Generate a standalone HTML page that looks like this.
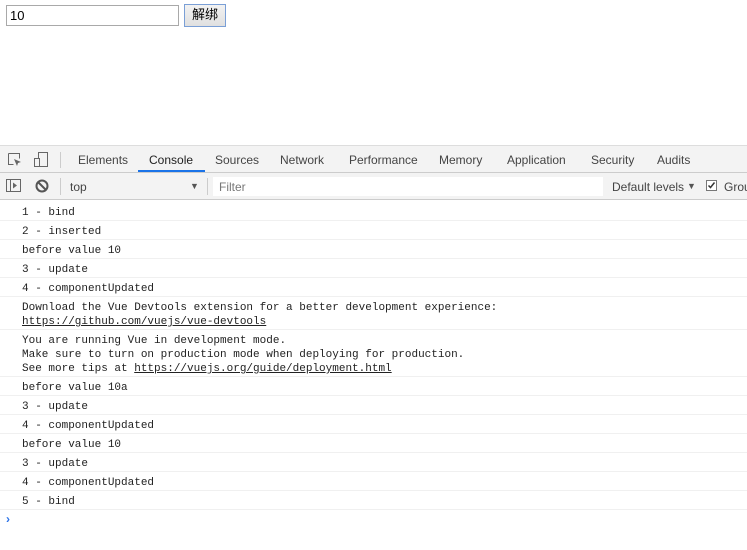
<!DOCTYPE html>
<html><head><meta charset="utf-8"><style>
*{box-sizing:border-box;margin:0;padding:0}
body{width:747px;height:550px;overflow:hidden;background:#fff;font-family:"Liberation Sans","Noto Sans CJK SC",sans-serif;position:relative}
.inp{position:absolute;left:6px;top:5px;width:173px;height:21px;border:1px solid #a9a9a9;font-size:13px;padding:2px 3px;line-height:15px}
.btn{position:absolute;left:184px;top:4px;width:42px;height:23px;border:1px solid #7a9fd6;background:linear-gradient(#f2f2f2,#e0e0e0);font-size:13px;text-align:center;line-height:20px}
.tabs{position:absolute;left:0;top:145px;width:747px;height:28px;background:#f3f3f3;border-top:1px solid #ddd;border-bottom:1px solid #ccc;font-size:12px;color:#444}
.tabs span{position:absolute;top:7px}
.ul{position:absolute;left:138px;top:24px;width:67px;height:2px;background:#1a73e8}
.tool{position:absolute;left:0;top:173px;width:747px;height:27px;background:#f3f3f3;border-bottom:1px solid #ccc;font-size:12px;color:#444}
.tool span{position:absolute;top:7px}
.filter{position:absolute;left:213px;top:4px;width:390px;height:19px;background:#fff}
.sep{position:absolute;width:1px;background:#ccc}
.log{position:absolute;left:0;top:202px;width:747px;font-family:"Liberation Mono",monospace;font-size:11px;color:#222}
.r{padding:4px 0 0 22px;line-height:14px;border-bottom:1px solid #f0f0f0;white-space:pre}
a{color:#222;text-decoration:underline}
</style></head><body>
<div class="inp">10</div>
<div class="btn">解绑</div>
<div class="tabs">
<svg style="position:absolute;left:7px;top:6px" width="16" height="16"><path d="M1.5 1.5h11v5M1.5 1.5v11h5" fill="none" stroke="#666"/><path d="M7 7l7 3-3 1-1 3z" fill="#666"/></svg>
<svg style="position:absolute;left:33px;top:5px" width="16" height="17"><rect x="5.5" y="1.5" width="9" height="14" fill="none" stroke="#666"/><rect x="1.5" y="7.5" width="5" height="8" fill="#f3f3f3" stroke="#666"/></svg>
<div class="sep" style="left:60px;top:6px;height:16px"></div>
<span style="left:78px">Elements</span><span style="left:149px;color:#222">Console</span><span style="left:215px">Sources</span><span style="left:280px">Network</span><span style="left:349px">Performance</span><span style="left:439px">Memory</span><span style="left:507px">Application</span><span style="left:591px">Security</span><span style="left:657px">Audits</span>
<div class="ul"></div>
</div>
<div class="tool">
<svg style="position:absolute;left:6px;top:6px" width="16" height="14"><rect x="0.5" y="0.5" width="14" height="12" fill="none" stroke="#666"/><path d="M4.5 1v12" stroke="#666"/><path d="M7 3.5l4 3-4 3z" fill="#666"/></svg>
<svg style="position:absolute;left:35px;top:6px" width="14" height="14"><circle cx="7" cy="7" r="5.5" fill="none" stroke="#555" stroke-width="2"/><path d="M3 3l8 8" stroke="#555" stroke-width="2"/></svg>
<div class="sep" style="left:60px;top:5px;height:17px"></div>
<span style="left:70px">top</span><span style="left:190px;font-size:9px;top:8px;color:#555">▼</span>
<div class="sep" style="left:207px;top:5px;height:17px"></div>
<div class="filter"><span style="left:6px;top:3px;color:#777;position:absolute">Filter</span></div>
<span style="left:612px">Default levels</span><span style="left:687px;font-size:9px;top:8px;color:#555">▼</span>
<svg style="position:absolute;left:706px;top:7px" width="12" height="12"><rect x="0.5" y="0.5" width="10" height="10" fill="#fff" stroke="#777"/><path d="M2.5 5.5l2 2 4-5" fill="none" stroke="#333" stroke-width="1.5"/></svg>
<span style="left:724px">Grou</span>
</div>
<div class="log">
<div class="r">1 - bind</div>
<div class="r">2 - inserted</div>
<div class="r">before value 10</div>
<div class="r">3 - update</div>
<div class="r">4 - componentUpdated</div>
<div class="r">Download the Vue Devtools extension for a better development experience:
<a>https://github.com/vuejs/vue-devtools</a></div>
<div class="r">You are running Vue in development mode.
Make sure to turn on production mode when deploying for production.
See more tips at <a>https://vuejs.org/guide/deployment.html</a></div>
<div class="r">before value 10a</div>
<div class="r">3 - update</div>
<div class="r">4 - componentUpdated</div>
<div class="r">before value 10</div>
<div class="r">3 - update</div>
<div class="r">4 - componentUpdated</div>
<div class="r">5 - bind</div>
<div style="padding:2px 0 0 6px;color:#2a72e8;font-weight:bold;font-family:'Liberation Sans',sans-serif;font-size:12px">›</div>
</div>
</body></html>
